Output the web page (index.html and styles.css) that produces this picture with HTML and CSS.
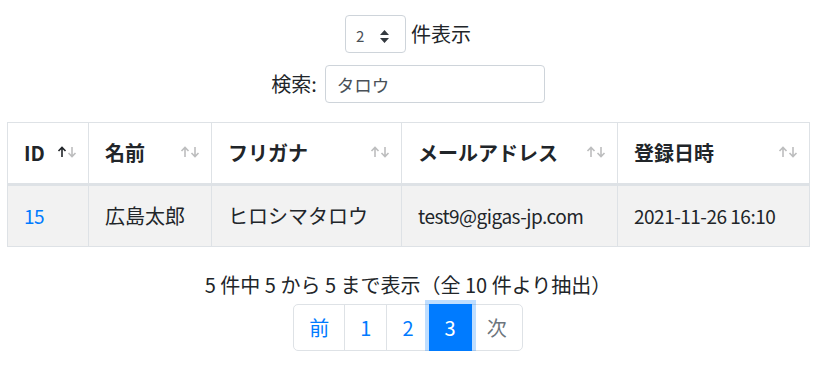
FILE: index.html
```html
<!DOCTYPE html>
<html lang="ja">
<head>
    <meta charset="UTF-8">
    <title>ユーザー一覧</title>
    <link rel="stylesheet" href="styles.css">
</head>
<body>
    <div class="wrapper">
        <div class="length">
            <div class="select-box">
                <select class="select-sm">
                    <option>2</option>
                </select>
                <svg class="caret" width="9" height="13" viewBox="0 0 9 13">
                    <path d="M4.5 0L9 5H0z M4.5 13L0 8h9z" fill="#343a40"/>
                </svg>
            </div>
            <span>件表示</span>
        </div>

        <div class="search">
            <label for="q">検索:</label>
            <input type="text" id="q" value="タロウ">
        </div>

        <table class="data">
            <colgroup>
                <col style="width: 81px">
                <col style="width: 123px">
                <col style="width: 190px">
                <col style="width: 216px">
                <col style="width: 192px">
            </colgroup>
            <thead>
                <tr>
                    <th><div class="head">ID <svg class="sort" width="20" height="12" viewBox="0 0 20 12"><path class="up on" d="M5 11V1.5M1.5 5L5 1.5 8.5 5"/><path class="down" d="M15 1v9.5M11.5 7l3.5 3.5 3.5-3.5"/></svg></div></th>
                    <th><div class="head">名前 <svg class="sort" width="20" height="12" viewBox="0 0 20 12"><path class="up" d="M5 11V1.5M1.5 5L5 1.5 8.5 5"/><path class="down" d="M15 1v9.5M11.5 7l3.5 3.5 3.5-3.5"/></svg></div></th>
                    <th><div class="head">フリガナ <svg class="sort" width="20" height="12" viewBox="0 0 20 12"><path class="up" d="M5 11V1.5M1.5 5L5 1.5 8.5 5"/><path class="down" d="M15 1v9.5M11.5 7l3.5 3.5 3.5-3.5"/></svg></div></th>
                    <th><div class="head">メールアドレス <svg class="sort" width="20" height="12" viewBox="0 0 20 12"><path class="up" d="M5 11V1.5M1.5 5L5 1.5 8.5 5"/><path class="down" d="M15 1v9.5M11.5 7l3.5 3.5 3.5-3.5"/></svg></div></th>
                    <th><div class="head">登録日時 <svg class="sort" width="20" height="12" viewBox="0 0 20 12"><path class="up" d="M5 11V1.5M1.5 5L5 1.5 8.5 5"/><path class="down" d="M15 1v9.5M11.5 7l3.5 3.5 3.5-3.5"/></svg></div></th>
                </tr>
            </thead>
            <tbody>
                <tr>
                    <td class="latin"><a href="#">15</a></td>
                    <td>広島太郎</td>
                    <td>ヒロシマタロウ</td>
                    <td class="latin">test9@gigas-jp.com</td>
                    <td class="latin">2021-11-26 16:10</td>
                </tr>
            </tbody>
        </table>

        <div class="info">5 件中 5 から 5 まで表示（全 10 件より抽出）</div>

        <ul class="pagination">
            <li><a href="#">前</a></li>
            <li><a href="#">1</a></li>
            <li><a href="#">2</a></li>
            <li class="active"><a href="#">3</a></li>
            <li class="disabled"><a href="#">次</a></li>
        </ul>
    </div>
</body>
</html>
```

FILE: styles.css
```css
body {
    margin: 0;
    font-family: "Noto Sans CJK JP", "Noto Sans", sans-serif;
    font-size: 20px;
    line-height: 1.5;
    color: #212529;
    background-color: #fff;
}

.wrapper {
    width: 802px;
    margin-left: 7px;
    padding-top: 15px;
}

.length {
    display: flex;
    justify-content: center;
    align-items: center;
    gap: 5px;
    height: 38px;
}

.select-box {
    position: relative;
}

.select-sm {
    appearance: none;
    -webkit-appearance: none;
    display: block;
    width: 61px;
    height: 38px;
    padding: 3px 10px 0;
    font-family: inherit;
    font-size: 15px;
    color: #495057;
    background-color: #fff;
    border: 1px solid #ced4da;
    border-radius: 4px;
}

.caret {
    position: absolute;
    right: 17px;
    top: 15px;
    pointer-events: none;
}

.search {
    display: flex;
    justify-content: center;
    align-items: center;
    gap: 8px;
    margin-top: 12px;
}

.search input {
    width: 220px;
    height: 38px;
    box-sizing: border-box;
    padding: 0 11px;
    font-family: inherit;
    font-size: 17.5px;
    color: #495057;
    border: 1px solid #ced4da;
    border-radius: 4px;
}

.data {
    width: 802px;
    table-layout: fixed;
    border-collapse: collapse;
    border: 1px solid #dee2e6;
    margin-top: 19px;
}

.data th,
.data td {
    border: 1px solid #dee2e6;
    padding: 15px 15px 15px 16px;
    line-height: 30px;
    text-align: left;
    white-space: nowrap;
}

.data th {
    font-weight: bold;
    border-bottom: 3px solid #dee2e6;
    padding-right: 11px;
}

.data td.latin {
    font-size: 19px;
    letter-spacing: -0.5px;
}

.data tbody tr {
    background-color: #f2f2f2;
}

.data a {
    color: #007bff;
    text-decoration: none;
}

.head {
    display: flex;
    justify-content: space-between;
    align-items: center;
}

.sort {
    margin-top: -3px;
}

.sort path {
    fill: none;
    stroke: #212529;
    stroke-width: 1.6;
    opacity: 0.3;
}

.sort path.on {
    opacity: 1;
}

.info {
    margin-top: 23px;
    text-align: center;
    line-height: 30px;
}

.pagination {
    display: flex;
    justify-content: center;
    list-style: none;
    margin: 4px 0 0;
    padding: 0;
}

.pagination a {
    display: block;
    padding: 10px 15px;
    line-height: 25px;
    color: #007bff;
    text-decoration: none;
    background-color: #fff;
    border: 1px solid #dee2e6;
    margin-left: -1px;
}

.pagination li:first-child a {
    margin-left: 0;
    border-radius: 5px 0 0 5px;
}

.pagination li:last-child a {
    border-radius: 0 5px 5px 0;
}

.pagination .active a {
    position: relative;
    color: #fff;
    background-color: #007bff;
    border-color: #007bff;
    box-shadow: 0 0 0 4px rgba(0, 123, 255, 0.25);
}

.pagination .disabled a {
    color: #6c757d;
}
```
